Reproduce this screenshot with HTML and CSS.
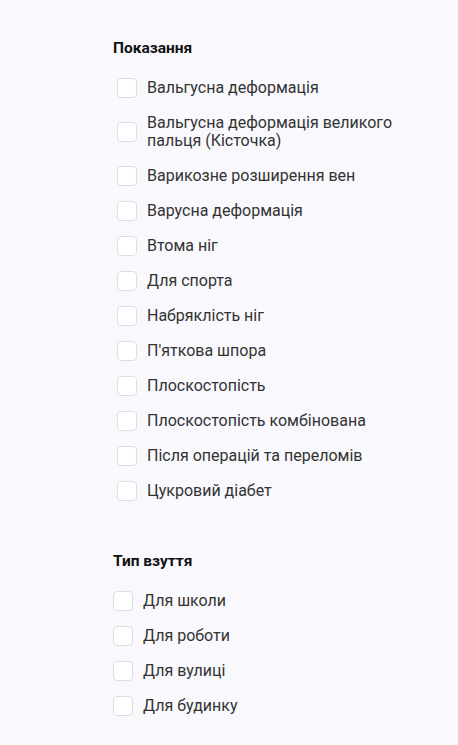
FILE: index.html
```html
<!DOCTYPE html>
<html lang="uk">
<head>
<meta charset="utf-8">
<title>Фільтри</title>
<link rel="stylesheet" href="styles.css">
</head>
<body>
<div class="filters">
  <section class="group group--indent">
    <h3 class="group__title">Показання</h3>
    <ul class="options">
      <li><label class="opt"><span class="box"></span><span class="txt">Вальгусна деформація</span></label></li>
      <li><label class="opt"><span class="box"></span><span class="txt">Вальгусна деформація великого пальця (Кісточка)</span></label></li>
      <li><label class="opt"><span class="box"></span><span class="txt">Варикозне розширення вен</span></label></li>
      <li><label class="opt"><span class="box"></span><span class="txt">Варусна деформація</span></label></li>
      <li><label class="opt"><span class="box"></span><span class="txt">Втома ніг</span></label></li>
      <li><label class="opt"><span class="box"></span><span class="txt">Для спорта</span></label></li>
      <li><label class="opt"><span class="box"></span><span class="txt">Набряклість ніг</span></label></li>
      <li><label class="opt"><span class="box"></span><span class="txt">П'яткова шпора</span></label></li>
      <li><label class="opt"><span class="box"></span><span class="txt">Плоскостопість</span></label></li>
      <li><label class="opt"><span class="box"></span><span class="txt">Плоскостопість комбінована</span></label></li>
      <li><label class="opt"><span class="box"></span><span class="txt">Після операцій та переломів</span></label></li>
      <li><label class="opt"><span class="box"></span><span class="txt">Цукровий діабет</span></label></li>
    </ul>
  </section>
  <section class="group">
    <h3 class="group__title">Тип взуття</h3>
    <ul class="options">
      <li><label class="opt"><span class="box"></span><span class="txt">Для школи</span></label></li>
      <li><label class="opt"><span class="box"></span><span class="txt">Для роботи</span></label></li>
      <li><label class="opt"><span class="box"></span><span class="txt">Для вулиці</span></label></li>
      <li><label class="opt"><span class="box"></span><span class="txt">Для будинку</span></label></li>
    </ul>
  </section>
</div>
</body>
</html>
```
FILE: styles.css
```css
html, body {
  margin: 0;
  padding: 0;
  background: #f9f9fd;
}
body {
  font-family: Roboto, "Noto Sans", sans-serif;
  color: #333333;
}
.filters {
  padding: 38px 0 20px 113px;
  display: flex;
  flex-direction: column;
  gap: 50px;
}
.group__title {
  margin: 0 0 20px;
  font-size: 15.5px;
  line-height: 20px;
  font-weight: 700;
  color: #111111;
}
.options {
  list-style: none;
  margin: 0;
  padding: 0;
  display: flex;
  flex-direction: column;
  gap: 15px;
}
.group--indent .options {
  padding-left: 4px;
}
.opt {
  display: flex;
  align-items: center;
  gap: 10px;
  cursor: pointer;
}
.box {
  flex: none;
  width: 20px;
  height: 20px;
  box-sizing: border-box;
  border: 1px solid #dedee2;
  border-radius: 4px;
  background: #ffffff;
}
.txt {
  font-size: 16px;
  line-height: 18px;
  padding: 0.5px 0 1.5px;
  max-width: 270px;
}
```
